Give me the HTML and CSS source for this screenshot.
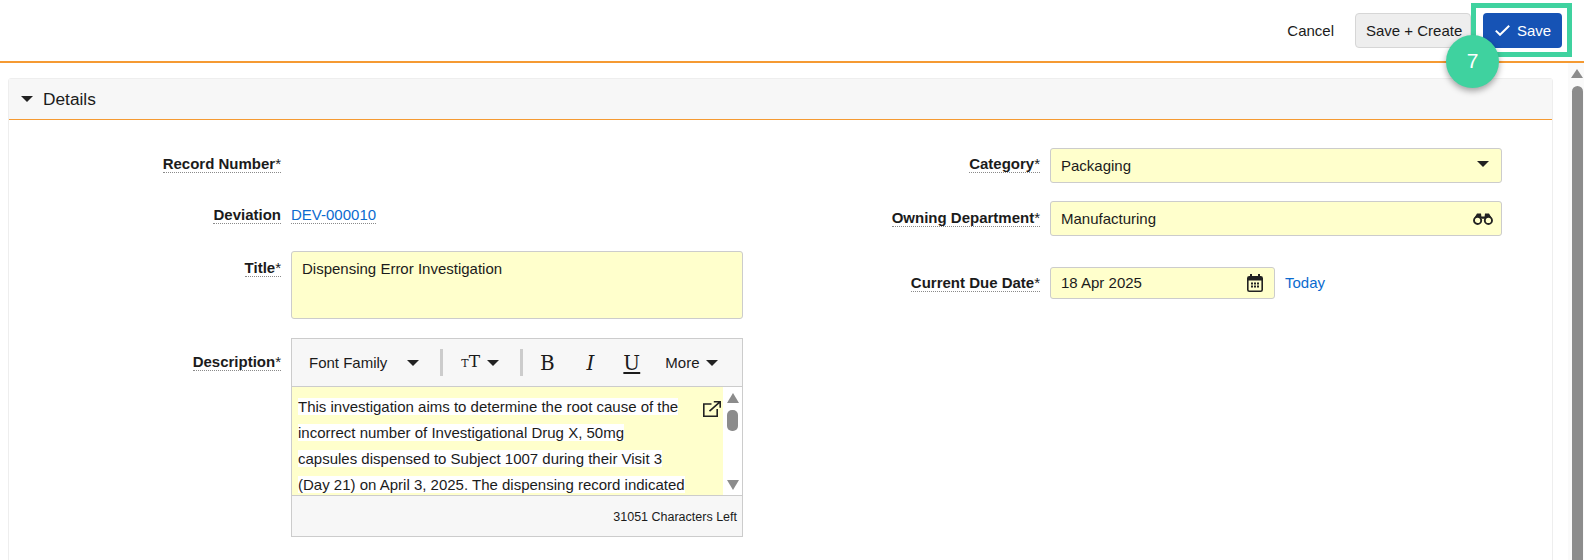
FILE: index.html
```html
<!DOCTYPE html>
<html lang="en">
<head>
<meta charset="utf-8">
<title>Details</title>
<link rel="stylesheet" href="styles.css">
</head>
<body>
<header class="topbar">
  <a class="cancel">Cancel</a>
  <button class="btn btn-light">Save + Create</button>
  <button class="btn btn-primary">
    <svg class="check" viewBox="0 0 15 11" width="15" height="11"><path d="M.8 5.6l4.2 4.2L14.2.8" fill="none" stroke="#fff" stroke-width="2"/></svg>
    <span>Save</span>
  </button>
  <span class="highlight"></span>
  <span class="step">7</span>
</header>
<div class="workspace">
  <main class="content">
    <section class="card">
      <div class="card-head"><span class="caret"></span><span>Details</span></div>
      <div class="form">
        <div class="col col-left">
          <div class="row row-record"><div class="label-cell"><span class="label"><b>Record Number</b>*</span></div></div>
          <div class="row row-dev"><div class="label-cell"><span class="label"><b>Deviation</b></span></div><a class="link dotted">DEV-000010</a></div>
          <div class="row row-title"><div class="label-cell"><span class="label"><b>Title</b>*</span></div><div class="input area">Dispensing Error Investigation</div></div>
          <div class="row row-desc"><div class="label-cell"><span class="label"><b>Description</b>*</span></div>
            <div class="editor">
              <div class="toolbar">
                <span class="tool-font">Font Family</span><span class="caret caret-font"></span>
                <span class="sep sep-1"></span>
                <span class="tool-size"><span class="small-t">T</span><span class="big-t">T</span></span><span class="caret caret-size"></span>
                <span class="sep sep-2"></span>
                <span class="fmt fmt-b">B</span>
                <span class="fmt fmt-i">I</span>
                <span class="fmt fmt-u">U</span>
                <span class="tool-more">More</span><span class="caret caret-more"></span>
              </div>
              <div class="editor-body">
                <div class="text">
                  <p><span>This investigation aims to determine the root cause of the</span></p>
                  <p><span>incorrect number of Investigational Drug X, 50mg</span></p>
                  <p><span>capsules dispensed to Subject 1007 during their Visit 3</span></p>
                  <p><span>(Day 21) on April 3, 2025. The dispensing record indicated</span></p>
                  <svg class="popout" viewBox="0 0 18 16" width="18" height="16"><path d="M8.5 3H.8v12.2h13.4V8" fill="none" stroke="#222" stroke-width="1.6"/><path d="M6.5 10.2L16.4 1.4M10.8.8h6.4v6" fill="none" stroke="#222" stroke-width="1.6"/></svg>
                </div>
                <div class="mini-scroll"><span class="arr-up"></span><span class="mini-thumb"></span><span class="arr-down"></span></div>
              </div>
              <div class="editor-foot">31051 Characters Left</div>
            </div>
          </div>
        </div>
        <div class="col col-right">
          <div class="row row-cat"><div class="label-cell"><span class="label"><b>Category</b>*</span></div><div class="input single select"><span>Packaging</span><span class="caret"></span></div></div>
          <div class="row row-own"><div class="label-cell"><span class="label"><b>Owning Department</b>*</span></div><div class="input single lookup"><span>Manufacturing</span>
            <svg class="binoc" viewBox="0 0 20 12" width="20" height="12"><circle cx="4.6" cy="7.4" r="3.6" fill="none" stroke="#222" stroke-width="1.9"/><circle cx="15.4" cy="7.4" r="3.6" fill="none" stroke="#222" stroke-width="1.9"/><path d="M1.6 4.6L4 .4h4l.4 3.2h3.2l.4-3.2h4l2.4 4.2-3-1.2-3 2.4H9L6 3.4z" fill="#222"/></svg>
          </div></div>
          <div class="row row-date"><div class="label-cell"><span class="label"><b>Current Due Date</b>*</span></div>
            <div class="input date"><span>18 Apr 2025</span>
              <svg class="cal" viewBox="0 0 16 18" width="16" height="18"><rect x=".8" y="2.8" width="14.4" height="14.4" rx="1.5" fill="none" stroke="#222" stroke-width="1.6"/><path d="M1 3h14v3.5H1z" fill="#222"/><path d="M4 0v3M12 0v3" stroke="#222" stroke-width="2"/><path d="M4 8.5h2v2H4zM7 8.5h2v2H7zM10 8.5h2v2h-2zM4 11.5h2v2H4zM7 11.5h2v2H7zM10 11.5h2v2h-2z" fill="#222"/></svg>
            </div>
            <a class="link today">Today</a>
          </div>
        </div>
      </div>
    </section>
  </main>
  <aside class="page-scroll"><span class="arr-up page-up"></span><span class="page-thumb"></span></aside>
</div>
</body>
</html>
```
FILE: styles.css
```css
* { box-sizing: border-box; }
html, body { margin: 0; height: 560px; overflow: hidden; }
body { background: #fff; color: #1b1b1b; font: 15px/20px "Liberation Sans", Arial, sans-serif; }

.topbar { position: relative; height: 63px; border-bottom: 2px solid #f59a32; display: flex; justify-content: flex-end; align-items: flex-start; padding: 13px 22px 0 0; }
.cancel { margin: 8px 21px 0 0; }
.btn { height: 35px; border-radius: 4px; font: 15px "Liberation Sans", Arial, sans-serif; padding: 0; }
.btn-light { width: 116px; background: #eee; border: 1px solid #d6d6d6; color: #1b1b1b; text-align: left; padding-left: 10px; margin-right: 12px; white-space: nowrap; }
.btn-primary { width: 79px; background: #1653b5; border: 0; color: #fff; display: flex; align-items: center; padding-left: 12px; gap: 7px; }
.highlight { position: absolute; left: 1471px; top: 3px; width: 101px; height: 54px; border: 5px solid #3fd29f; }
.step { position: absolute; left: 1446px; top: 35px; width: 53px; height: 53px; border-radius: 50%; background: #3fd29f; color: #fff; font-size: 21px; line-height: 51px; text-align: center; box-shadow: 0 3px 6px rgba(0,0,0,.35); z-index: 2; }

.workspace { display: flex; height: 497px; overflow: hidden; }
.content { flex: 1; padding: 15px 0 0 8px; min-width: 0; }
.card { width: 1545px; height: 500px; border: 1px solid #eee; border-radius: 3px 3px 0 0; }
.card-head { height: 41px; background: #f7f7f7; border-bottom: 1px solid #f59a32; display: flex; align-items: center; font-size: 17.3px; padding-left: 12px; gap: 10px; }

.page-scroll { width: 16px; background: #fafafa; display: flex; flex-direction: column; align-items: flex-end; padding: 6px 1px 0 0; }
.page-up { margin-bottom: 8px; }
.page-thumb { flex: 1; width: 11px; background: #8c8c8c; border-radius: 6px 6px 0 0; }
.arr-up, .arr-down { display: block; width: 0; height: 0; border-left: 6px solid transparent; border-right: 6px solid transparent; }
.arr-up { border-bottom: 9px solid #8c8c8c; }
.arr-down { border-top: 9px solid #8c8c8c; }

.caret { display: inline-block; flex: none; width: 0; height: 0; border-left: 6px solid transparent; border-right: 6px solid transparent; border-top: 6px solid #222; }

.form { display: flex; gap: 20px; }
.col-left { width: 734px; flex: none; }
.col-right { flex: 1; }
.row { display: flex; align-items: flex-start; }
.label-cell { flex: none; display: flex; justify-content: flex-end; margin-right: 10px; }
.col-left .label-cell { width: 272px; }
.col-right .label-cell { width: 277px; }
.label, .dotted { display: block; height: 18px; line-height: 17px; border-bottom: 1px dotted #8a8a8a; white-space: nowrap; }
.link { color: #0b6bcf; }

.row-record { margin-top: 35px; }
.row-dev { margin-top: 33px; }
.row-title { margin-top: 27px; }
.row-title .label-cell { padding-top: 8px; }
.row-desc { margin-top: 19px; }
.row-desc .label-cell { padding-top: 15px; }
.row-cat { margin-top: 28px; }
.row-cat .label-cell { padding-top: 7px; }
.row-own { margin-top: 18px; }
.row-own .label-cell { padding-top: 8px; }
.row-date { margin-top: 31px; align-items: center; }
.row-date .label-cell { align-self: flex-start; padding-top: 7px; }

.input { background: #ffffcc; border: 1px solid #ccc; border-radius: 3px; padding-left: 10px; }
.area { width: 452px; height: 68px; padding-top: 7px; }
.single, .date { display: flex; align-items: center; justify-content: space-between; }
.single { width: 452px; height: 35px; }
.select { padding-right: 12px; }
.select .caret { margin-top: -3px; }
.lookup { padding-right: 8px; }
.date { width: 225px; height: 32px; padding-right: 11px; }
.today { margin-left: 10px; }

.editor { width: 452px; height: 199px; border: 1px solid #ccc; display: flex; flex-direction: column; }
.toolbar { height: 48px; flex: none; background: #f7f7f7; border-bottom: 1px solid #ccc; display: flex; align-items: center; padding-left: 17px; }
.caret-font { margin-left: 20px; }
.sep { flex: none; width: 3px; height: 27px; background: #ccc; }
.sep-1 { margin-left: 21px; }
.tool-size { margin-left: 18px; display: flex; align-items: baseline; font-family: "DejaVu Serif", serif; width: 17px; }
.small-t { font-size: 11px; }
.big-t { font-size: 17px; }
.caret-size { margin-left: 9px; }
.sep-2 { margin-left: 21px; }
.fmt { font-family: "DejaVu Serif", serif; font-size: 20px; line-height: 24px; width: 16px; text-align: center; }
.fmt-b { margin-left: 16px; }
.fmt-i { margin-left: 27px; font-style: italic; }
.fmt-u { margin-left: 25px; text-decoration: underline; text-decoration-thickness: 1.5px; text-underline-offset: 2px; }
.tool-more { margin-left: 26px; }
.caret-more { margin-left: 6px; }

.editor-body { height: 108px; flex: none; display: flex; overflow: hidden; }
.text { position: relative; width: 431px; flex: none; background: #ffffcc; padding: 7px 0 0 6px; }
.text p { margin: 0; line-height: 26px; white-space: nowrap; }
.text p span { background: #fff; }
.popout { position: absolute; left: 411px; top: 14px; }
.mini-scroll { flex: 1; display: flex; flex-direction: column; align-items: center; padding: 6px 0 5px; }
.mini-scroll .arr-up, .mini-scroll .arr-down { border-left-width: 6.5px; border-right-width: 6.5px; border-top-width: 10px; border-bottom-width: 10px; }
.mini-scroll .arr-up { border-top: 0; }
.mini-scroll .arr-down { border-bottom: 0; margin-top: auto; }
.mini-thumb { width: 11px; height: 21px; margin-top: 7px; background: #8c8c8c; border-radius: 5px; }
.editor-foot { flex: 1; background: #f7f7f7; border-top: 1px solid #ccc; font-size: 12.5px; text-align: right; padding: 11px 5px 0 0; }
```
